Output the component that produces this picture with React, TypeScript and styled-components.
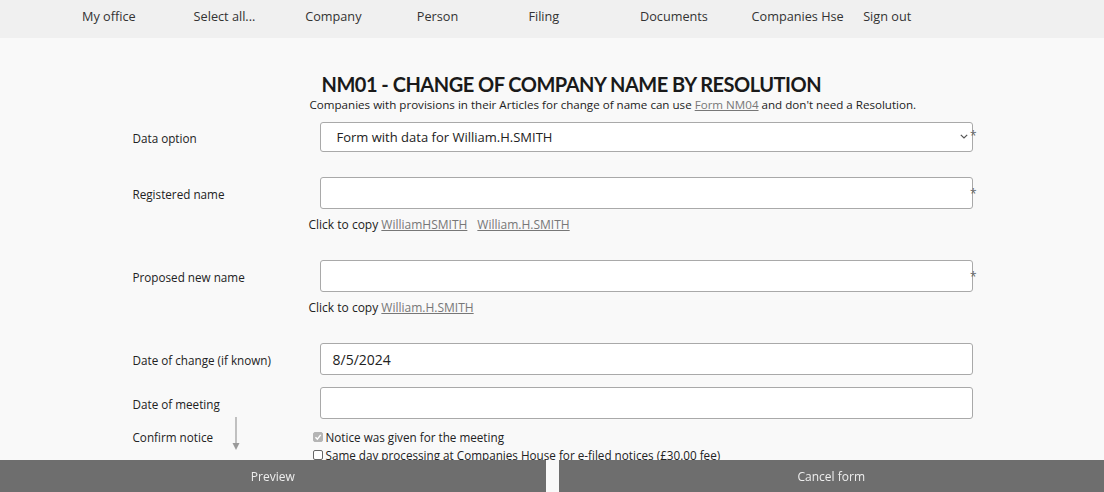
import styled, { createGlobalStyle } from "styled-components";

const GlobalStyle = createGlobalStyle`
  html, body {
    margin: 0;
    padding: 0;
    background: #f9f9f9;
    font-family: "Open Sans", "Liberation Sans", sans-serif;
    color: #222;
    overflow: hidden;
  }
`;

const navItems = [
  "My office",
  "Select all...",
  "Company",
  "Person",
  "Filing",
  "Documents",
  "Companies Hse",
  "Sign out",
];

const Check = ({ checked }: { checked?: boolean }) => (
  <Box $checked={checked}>
    {checked && (
      <svg width="8" height="8" viewBox="0 0 10 10">
        <path d="M1.8 5.2 L4.2 7.6 L8.4 2.4" fill="none" stroke="#fff" strokeWidth="1.8" />
      </svg>
    )}
  </Box>
);

export default function App() {
  return (
    <>
      <GlobalStyle />
      <Nav>
        {navItems.map((n) => (
          <NavItem key={n}>{n}</NavItem>
        ))}
      </Nav>

      <Main>
        <Heading>
          <Title>NM01 - CHANGE OF COMPANY NAME BY RESOLUTION</Title>
          <Intro>
            Companies with provisions in their Articles for change of name can use{" "}
            <Link href="#">Form NM04</Link> and don't need a Resolution.
          </Intro>
        </Heading>

        <Row $after={25}>
          <Label>Data option</Label>
          <FieldWrap>
            <Select>
              Form with data for William.H.SMITH
              <Chevron width="8" height="5" viewBox="0 0 8 5">
                <path d="M0.8 0.8 L4 4 L7.2 0.8" fill="none" stroke="#555" strokeWidth="1.2" />
              </Chevron>
            </Select>
            <Star $top={8}>*</Star>
          </FieldWrap>
        </Row>

        <Row $after={7}>
          <Label>Registered name</Label>
          <FieldWrap>
            <Input />
            <Star $top={11}>*</Star>
          </FieldWrap>
        </Row>
        <Helper $after={26}>
          Click to copy <Link href="#">WilliamHSMITH</Link>
          <Link href="#">William.H.SMITH</Link>
        </Helper>

        <Row $after={7}>
          <Label>Proposed new name</Label>
          <FieldWrap>
            <Input />
            <Star $top={11}>*</Star>
          </FieldWrap>
        </Row>
        <Helper $after={26}>
          Click to copy <Link href="#">William.H.SMITH</Link>
        </Helper>

        <Row $after={12}>
          <Label>Date of change (if known)</Label>
          <FieldWrap>
            <Input>8/5/2024</Input>
          </FieldWrap>
        </Row>

        <Row $after={9}>
          <Label>Date of meeting</Label>
          <FieldWrap>
            <Input />
          </FieldWrap>
        </Row>

        <Row $after={0}>
          <Label $top>
            Confirm notice
            <Arrow width="10" height="34" viewBox="0 0 10 34">
              <line x1="5" y1="0" x2="5" y2="27" stroke="#9a9a9a" strokeWidth="1.2" />
              <path d="M1.5 26 L5 33 L8.5 26 Z" fill="#9a9a9a" />
            </Arrow>
          </Label>
          <Checks>
            <CheckRow>
              <Check checked />
              Notice was given for the meeting
            </CheckRow>
            <CheckRow>
              <Check />
              Same day processing at Companies House for e-filed notices (£30.00 fee)
            </CheckRow>
          </Checks>
        </Row>
      </Main>

      <Footer>
        <FooterButton>Preview</FooterButton>
        <FooterButton>Cancel form</FooterButton>
      </Footer>
    </>
  );
}

const Nav = styled.nav`
  height: 38px;
  background: #f0f0f0;
  display: flex;
  align-items: center;
  padding: 0 0 6px 82px;
  box-sizing: border-box;
  font-size: 12.7px;
  color: #333;
`;

const NavItem = styled.div`
  width: 111.6px;
  flex: none;
  white-space: nowrap;
`;

const Main = styled.main`
  width: 841px;
  margin: 0 auto;
  padding: 34px 0 0 1px;
  box-sizing: border-box;
`;

const Heading = styled.div`
  margin-bottom: 9px;
`;

const Title = styled.h1`
  margin: 0 0 0 189px;
  font-family: "Lato", "Open Sans", sans-serif;
  font-weight: 700;
  font-size: 20px;
  letter-spacing: -0.5px;
  line-height: 24px;
  color: #1a1a1a;
`;

const Intro = styled.p`
  margin: 0 0 0 177px;
  font-size: 11.6px;
  line-height: 17px;
  color: #222;
`;

const Link = styled.a`
  color: #777;
  text-decoration: underline;
  margin-right: 10px;
  &:last-child {
    margin-right: 0;
  }
`;

const Row = styled.div<{ $after: number }>`
  display: grid;
  grid-template-columns: 187px 1fr;
  align-items: center;
  margin-bottom: ${(p) => p.$after}px;
`;

const Label = styled.div<{ $top?: boolean }>`
  position: relative;
  font-size: 11.7px;
  line-height: 18px;
  color: #222;
  align-self: ${(p) => (p.$top ? "start" : "center")};
  padding-top: ${(p) => (p.$top ? "0" : "1px")};
`;

const FieldWrap = styled.div`
  position: relative;
`;

const fieldBase = `
  box-sizing: border-box;
  background: #fff;
  border: 1px solid #a9a9a9;
  border-radius: 3px;
  color: #222;
  display: flex;
  align-items: center;
`;

const Select = styled.div`
  ${fieldBase}
  height: 30px;
  padding: 0 16px;
  font-size: 13px;
  position: relative;
`;

const Chevron = styled.svg`
  position: absolute;
  right: 4px;
  top: 11px;
`;

const Input = styled.div`
  ${fieldBase}
  height: 32px;
  padding: 0 12px;
  font-size: 14px;
`;

const Star = styled.span<{ $top: number }>`
  position: absolute;
  right: -4px;
  top: ${(p) => p.$top}px;
  font-size: 12px;
  line-height: 12px;
  color: #666;
`;

const Helper = styled.div<{ $after: number }>`
  margin-left: 176px;
  font-size: 12px;
  line-height: 18px;
  color: #222;
  margin-bottom: ${(p) => p.$after}px;
`;

const Arrow = styled.svg`
  position: absolute;
  left: 98px;
  top: -11px;
`;

const Checks = styled.div`
  margin-left: -7px;
  display: flex;
  flex-direction: column;
`;

const CheckRow = styled.label`
  display: flex;
  align-items: center;
  gap: 3px;
  font-size: 11.7px;
  line-height: 18px;
  color: #222;
  white-space: nowrap;
`;

const Box = styled.span<{ $checked?: boolean }>`
  box-sizing: border-box;
  width: 10px;
  height: 10px;
  border-radius: 2px;
  display: inline-flex;
  align-items: center;
  justify-content: center;
  background: ${(p) => (p.$checked ? "#b5b5b5" : "#fff")};
  border: 1px solid ${(p) => (p.$checked ? "#b5b5b5" : "#666")};
`;

const Footer = styled.footer`
  position: fixed;
  left: 0;
  right: 0;
  bottom: 0;
  height: 32px;
  display: flex;
  gap: 13px;
`;

const FooterButton = styled.button`
  flex: 1;
  border: none;
  background: #6e6e6e;
  color: #eee;
  font-family: "Open Sans", "Liberation Sans", sans-serif;
  font-size: 12px;
  cursor: pointer;
`;
